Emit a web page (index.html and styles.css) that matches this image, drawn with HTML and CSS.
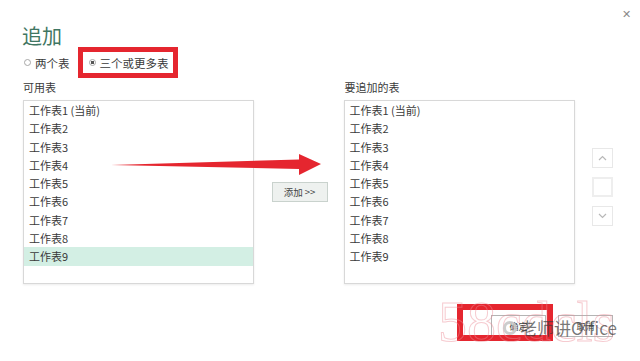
FILE: index.html
```html
<!DOCTYPE html>
<html lang="zh-CN">
<head>
    <meta charset="UTF-8">
    <title>追加</title>
    <link rel="stylesheet" href="styles.css">
</head>
<body>
    <div class="dialog">
        <span class="closeBtn">&#x2715;</span>

        <h1 class="title">追加</h1>

        <div class="options">
            <label class="radio"><span class="dot"></span>两个表</label>
            <label class="radio marked"><span class="dot on"></span>三个或更多表</label>
        </div>

        <div class="listArea">
            <div class="column">
                <div class="colLabel">可用表</div>
                <ul class="sheetList">
                    <li>工作表1 (当前)</li>
                    <li>工作表2</li>
                    <li>工作表3</li>
                    <li>工作表4</li>
                    <li>工作表5</li>
                    <li>工作表6</li>
                    <li>工作表7</li>
                    <li>工作表8</li>
                    <li class="selected">工作表9</li>
                </ul>
            </div>

            <div class="middle">
                <button class="addBtn">添加 &gt;&gt;</button>
            </div>

            <div class="column">
                <div class="colLabel">要追加的表</div>
                <ul class="sheetList right">
                    <li>工作表1 (当前)</li>
                    <li>工作表2</li>
                    <li>工作表3</li>
                    <li>工作表4</li>
                    <li>工作表5</li>
                    <li>工作表6</li>
                    <li>工作表7</li>
                    <li>工作表8</li>
                    <li>工作表9</li>
                </ul>
            </div>

            <div class="sideButtons">
                <span class="sideBtn">
                    <svg width="9" height="6" viewBox="0 0 9 6"><path d="M1 5 L4.5 1.5 L8 5" fill="none" stroke="#b8b8b8" stroke-width="1.2"/></svg>
                </span>
                <span class="sideBtn blank"></span>
                <span class="sideBtn">
                    <svg width="9" height="6" viewBox="0 0 9 6"><path d="M1 1 L4.5 4.5 L8 1" fill="none" stroke="#b8b8b8" stroke-width="1.2"/></svg>
                </span>
            </div>
        </div>

        <div class="footer">
            <button class="dlgBtn">确定</button>
            <button class="dlgBtn">取消</button>
        </div>

        <!-- annotations drawn over the screenshot -->
        <svg class="arrow" width="220" height="30" viewBox="0 0 220 30">
            <path d="M0 13 L188 7.5 L188 2 L210 12 L188 23 L188 17 Z" fill="#e5262f"/>
        </svg>
        <div class="okMark"></div>
        <div class="stamp">58cdcls</div>
        <div class="byline"><span class="swirl"></span>老师讲Office</div>
    </div>
</body>
</html>
```

FILE: styles.css
```css
* {
    margin: 0;
    padding: 0;
    box-sizing: border-box;
}

body {
    width: 640px;
    height: 361px;
    overflow: hidden;
    background-color: #ffffff;
    font-family: "Noto Sans CJK SC", "Noto Sans", sans-serif;
    color: #3a3a3a;
}

.dialog {
    position: relative;
    height: 361px;
    padding: 25px 27px 0 23px;
}

.closeBtn {
    position: absolute;
    top: 5px;
    left: 622px;
    font-size: 11px;
    color: #8a8a8a;
}

.title {
    height: 22px;
    font-size: 20px;
    line-height: 22px;
    font-weight: normal;
    color: #3f7662;
    margin-left: -1px;
}

.options {
    display: flex;
    align-items: center;
    height: 31px;
}

.radio {
    display: flex;
    align-items: center;
    white-space: nowrap;
    font-size: 11.5px;
    color: #3a3a3a;
}

.radio.marked {
    margin-left: 8px;
    height: 31px;
    width: 100px;
    padding-left: 6px;
    border: 5px solid #e5262f;
}

.dot {
    flex: none;
    width: 7px;
    height: 7px;
    margin: 0 4px 0 1px;
    border: 1px solid #a8a8a8;
    border-radius: 50%;
    background-color: #ffffff;
}

.marked .dot {
    margin-left: 0;
}

.dot.on {
    background: radial-gradient(circle, #555 0, #555 1.5px, #fff 2px);
}

.listArea {
    display: flex;
    height: 206px;
}

.column {
    width: 231px;
}

.colLabel {
    height: 22px;
    font-size: 11px;
    line-height: 18px;
}

.sheetList {
    list-style: none;
    height: 184px;
    border: 1px solid #d8d8d8;
    box-shadow: 0 1px 2px rgba(0, 0, 0, 0.08);
    font-size: 11px;
}

.sheetList li {
    height: 18.3px;
    line-height: 18.3px;
    padding-left: 5px;
}

.sheetList.right li {
    padding-left: 4px;
}

.sheetList li.selected {
    background-color: #d3efe4;
}

.middle {
    width: 91px;
    padding: 99px 0 0 18px;
}

.addBtn {
    width: 56px;
    height: 20px;
    font-family: inherit;
    font-size: 9.5px;
    color: #444;
    background-color: #eef1ef;
    border: 1px solid #c9d2cd;
}

.sideButtons {
    display: flex;
    flex-direction: column;
    gap: 9px;
    padding: 70px 0 0 17px;
}

.sideBtn {
    display: flex;
    align-items: center;
    justify-content: center;
    width: 21px;
    height: 20px;
    border: 1px solid #e8e8e8;
}

.sideBtn.blank {
    border: 2px solid #eeeeee;
}

.footer {
    display: flex;
    justify-content: flex-end;
    gap: 12px;
    margin-top: 31px;
}

.dlgBtn {
    width: 55px;
    height: 22px;
    font-family: inherit;
    font-size: 9px;
    color: #444;
    background-color: #ffffff;
    border: 1px solid #b4b4b4;
}

.arrow {
    position: absolute;
    left: 111px;
    top: 152px;
}

.okMark {
    position: absolute;
    left: 457px;
    top: 304px;
    width: 96px;
    height: 37px;
    border: 6px solid #e5262f;
}

.stamp {
    position: absolute;
    left: 438px;
    top: 292px;
    font-family: "Liberation Serif", serif;
    font-size: 58px;
    line-height: 60px;
    letter-spacing: 0;
    color: transparent;
    -webkit-text-stroke: 1px rgba(236, 140, 150, 0.45);
}

.byline {
    position: absolute;
    left: 503px;
    top: 318px;
    display: flex;
    align-items: center;
    font-size: 17px;
    line-height: 20px;
    color: rgba(60, 60, 60, 0.7);
}

.swirl {
    width: 14px;
    height: 14px;
    margin-right: 3px;
    border: 3px solid rgba(200, 200, 200, 0.9);
    border-radius: 50%;
}
```
